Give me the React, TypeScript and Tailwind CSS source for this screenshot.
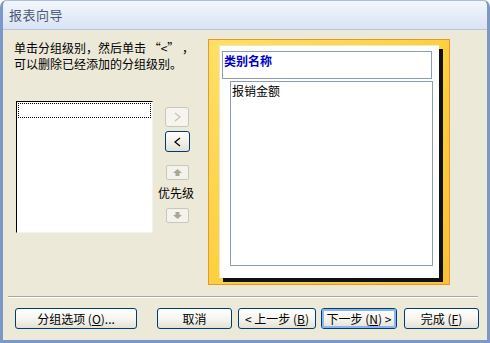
const FONT = "font-['SimSun','Noto_Sans_CJK_SC',sans-serif]";

function PushButton({
  children,
  width,
  focused = false,
  className = "",
}: {
  children: React.ReactNode;
  width: string;
  focused?: boolean;
  className?: string;
}) {
  return (
    <div
      className={`${width} h-[21px] rounded-[3px] border border-[#003c74] bg-gradient-to-b from-white via-[#f6f5f0] to-[#e3e1d6] flex items-center justify-center text-[12px] leading-[15px] text-black ${className}`}
    >
      <div
        className={`w-full h-full rounded-[2px] flex items-center justify-center ${
          focused ? "border-2 border-[#8cb4f0]" : "border border-transparent"
        }`}
      >
        {children}
      </div>
    </div>
  );
}

function SmallArrowButton({ dir }: { dir: "up" | "down" }) {
  return (
    <div className="w-[23px] h-[15px] rounded-[2px] border border-[#c9c7ba] bg-[#f3f2ec] flex items-center justify-center">
      <svg width="9" height="7" viewBox="0 0 9 7">
        {dir === "up" ? (
          <path d="M4.5 0 L9 4 L6.5 4 L6.5 7 L2.5 7 L2.5 4 L0 4 Z" fill="#a9a796" />
        ) : (
          <path d="M4.5 7 L9 3 L6.5 3 L6.5 0 L2.5 0 L2.5 3 L0 3 Z" fill="#a9a796" />
        )}
      </svg>
    </div>
  );
}

export default function App() {
  return (
    <div
      className={`w-[490px] h-[343px] flex flex-col overflow-hidden rounded-t-[7px] border-x-[3px] border-b-[3px] border-[#7c98c8] bg-[#ece9d8] text-[12px] leading-[15px] ${FONT}`}
    >
      {/* Title bar */}
      <div className="h-[30px] shrink-0 -mx-[3px] px-[8px] flex items-center rounded-t-[7px] border-t border-x border-[#a9bde0] bg-gradient-to-b from-[#f4f7fc] to-[#d9e3f3] border-b border-b-[#b6c6e2]">
        <span className="text-[13px] leading-[16px] text-[#4b5a78] tracking-[0.5px]">报表向导</span>
      </div>

      {/* Body */}
      <div className="flex-1 flex flex-col">
        <div className="h-[266px] flex">
          {/* Left side */}
          <div className="w-[205px] pl-[11px] pt-[10px] flex flex-col">
            <p className="text-[12px] leading-[16px] text-black">
              单击分组级别，然后单击 “&lt;” ，
              <br />
              可以删除已经添加的分组级别。
            </p>
            <div className="mt-[29px] ml-[2px] flex">
              {/* List box */}
              <div className="w-[137px] h-[132px] border-l border-t border-l-black border-t-black border-r border-b border-r-[#f4f3ee] border-b-[#f4f3ee] bg-white p-[1px]">
                <div className="h-[15px] border border-dotted border-black" />
              </div>
              {/* Move buttons */}
              <div className="ml-[3px] w-[40px] pt-[6px] flex flex-col items-center">
                <div className="ml-[2px] w-[24px] h-[20px] rounded-[3px] border border-[#c9c7ba] bg-[#f5f4ef] flex items-center justify-center">
                  <svg width="7" height="10" viewBox="0 0 7 10">
                    <path d="M1 1 L6 5 L1 9" fill="none" stroke="#c3c1b6" strokeWidth="1.2" />
                  </svg>
                </div>
                <div className="mt-[4px] ml-[2px] w-[25px] h-[21px] rounded-[3px] border border-[#003c74] bg-gradient-to-b from-white to-[#e3e1d6] flex items-center justify-center">
                  <svg width="7" height="10" viewBox="0 0 7 10">
                    <path d="M6 1 L1 5 L6 9" fill="none" stroke="#000" strokeWidth="1.3" />
                  </svg>
                </div>
                <div className="mt-[13px] ml-[3px]">
                  <SmallArrowButton dir="up" />
                </div>
                <div className="mt-[5px] text-[12px] leading-[15px] text-black">优先级</div>
                <div className="mt-[8px] ml-[3px]">
                  <SmallArrowButton dir="down" />
                </div>
              </div>
            </div>
          </div>

          {/* Preview */}
          <div className="mt-[9px] w-[242px] h-[246px] border border-[#e8962e] bg-gradient-to-br from-[#ffe066] via-[#fcd03e] to-[#f8c236] pl-[10px] pt-[5px]">
            <div className="w-[220px] h-[233px] bg-white border-l border-t border-[#f0e6c8] shadow-[4px_4px_0_#111] flex flex-col">
              <div className="ml-[2px] mt-[5px] w-[210px] h-[28px] border border-[#8c9db2] px-[1px] pt-[1px] text-[12px] leading-[15px] font-bold text-[#0000c8]">
                类别名称
              </div>
              <div className="ml-[10px] mt-[2px] w-[203px] h-[185px] border border-[#8c9db2] pl-[1px] pt-[1px] text-[12px] leading-[15px] text-black">
                报销金额
              </div>
            </div>
          </div>
        </div>

        {/* Separator */}
        <div className="mx-[5px] w-[470px] border-t border-[#aca899] border-b border-b-white" />

        {/* Buttons */}
        <div className="mt-[10px] pl-[12px] flex">
          <PushButton width="w-[122px]">
            分组选项 (<u>O</u>)...
          </PushButton>
          <PushButton width="w-[75px]" className="ml-[20px]">
            取消
          </PushButton>
          <PushButton width="w-[78px]" className="ml-[6px]">
            &lt; 上一步 (<u>B</u>)
          </PushButton>
          <PushButton width="w-[76px]" focused className="ml-[5px]">
            下一步 (<u>N</u>) &gt;
          </PushButton>
          <PushButton width="w-[75px]" className="ml-[7px]">
            完成 (<u>F</u>)
          </PushButton>
        </div>
      </div>
    </div>
  );
}
